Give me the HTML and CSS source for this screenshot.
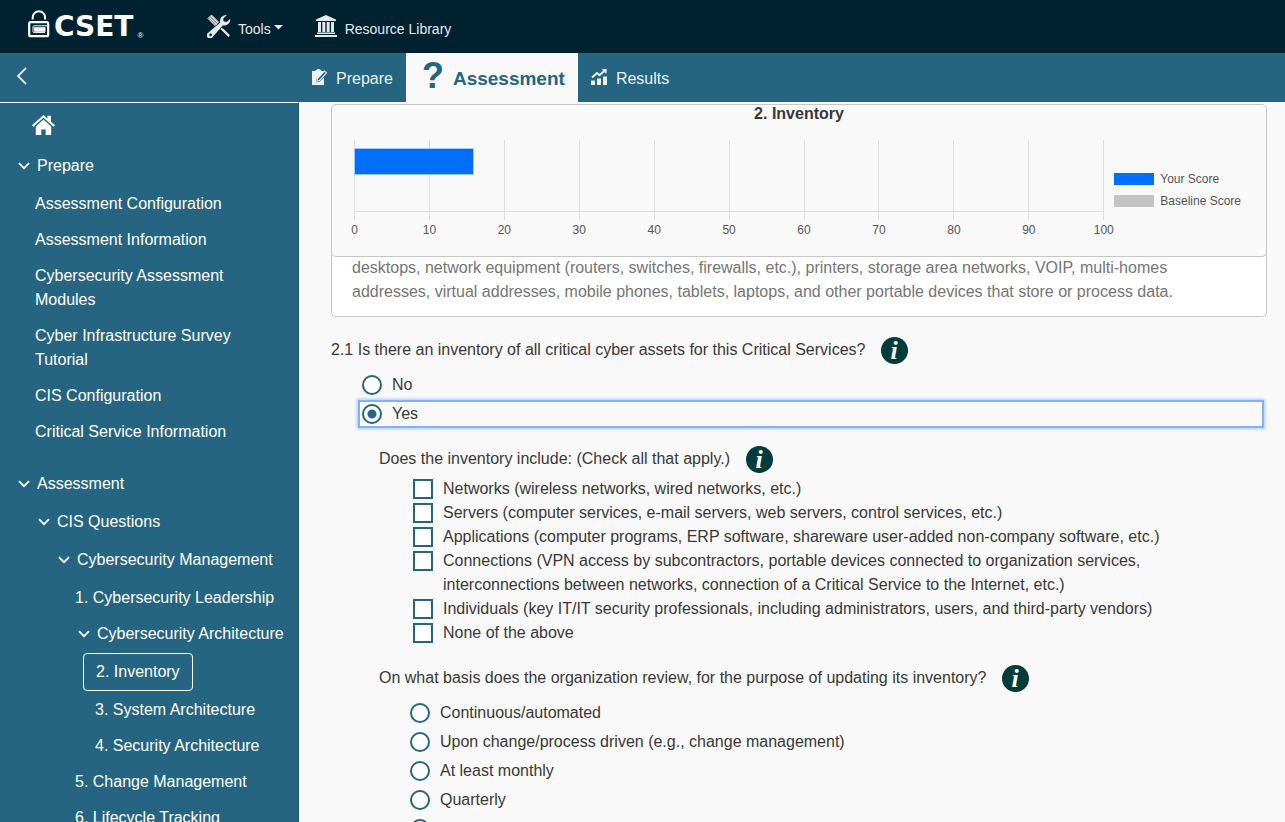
FILE: index.html
```html
<!DOCTYPE html>
<html lang="en">
<head>
<meta charset="utf-8">
<meta name="viewport" content="width=device-width, initial-scale=1">
<title>CSET - 2. Inventory</title>
<link rel="stylesheet" href="styles.css">
</head>
<body>
<svg class="sprite" aria-hidden="true">
  <symbol id="chevron" viewBox="0 0 12 8"><path d="M1 1.2 6 6.2 11 1.2" fill="none" stroke="currentColor" stroke-width="1.8"/></symbol>
</svg>

<header class="topbar">
  <a class="brand" href="#">
    <svg class="lock" width="22" height="28" viewBox="0 0 22 28" aria-hidden="true">
      <path d="M4.700 9.500V7.500a6.200 6.200 0 0 1 12.400 0v2" fill="none" stroke="#fff" stroke-width="2"/>
      <rect x="1.200" y="12.200" width="19" height="14" rx="1.500" fill="none" stroke="#fff" stroke-width="2.200"/>
      <path d="M19 15.800H6.200Q5 15.800 5 17v4.600q0 1 1.200 1H17" fill="none" stroke="#fff" stroke-width="1"/>
      <rect x="6" y="17.200" width="11.500" height="4.600" fill="#fff"/>
    </svg>
    <span class="wordmark">CSET</span><span class="reg">®</span>
  </a>
  <nav class="menu" aria-label="Main">
    <button class="menu-item" type="button">
      <svg width="24" height="24" viewBox="0 0 24 24" aria-hidden="true">
        <path d="M1 4.5 4.5 1 11.5 8 8 11.5Z" fill="#8d9ba2" stroke="#e6e9ea" stroke-width="1"/>
        <path d="M2.5 3.5 9.5 10.5M4 2 11 9" stroke="#e6e9ea" stroke-width="1"/>
        <path d="M14 14.5 22 22.5" stroke="#e6e9ea" stroke-width="1.6"/>
        <path d="M14 14.500 16 14.500 22.800 21 21.500 22.700 15 16Z" fill="#e6e9ea"/>
        <path fill-rule="evenodd" d="M19.8 1.200A5.800 5.800 0 0 0 13.300 8.600L1.500 18.600A3.200 3.200 0 1 0 5.900 22.700L15.900 11.300A5.800 5.800 0 0 0 23.100 4.900L19.700 7.900 16.500 7.300 16.300 4.300ZM3.600 19.600a1.300 1.300 0 1 1 0 2.600 1.300 1.300 0 0 1 0-2.600Z" fill="#e6e9ea"/>
      </svg>
      <span>Tools</span>
      <svg class="caret" width="9" height="5" viewBox="0 0 9 5" aria-hidden="true"><path d="M0 0h9L4.500 4.500Z" fill="#e6e9ea"/></svg>
    </button>
    <a class="menu-item" href="#">
      <svg width="22" height="22" viewBox="0 0 22 22" aria-hidden="true">
        <path d="M11 0 21 4.500V6H1V4.500ZM3 7h3v10H3ZM7.300 7h3v10h-3ZM11.700 7h3v10h-3ZM16 7h3v10h-3ZM2 17.500h18V19H2ZM0 20h22v2H0Z" fill="#e6e9ea"/>
      </svg>
      <span>Resource Library</span>
    </a>
  </nav>
</header>

<div class="tabbar">
  <div class="collapse-cell">
    <button class="collapse" type="button" aria-label="Collapse navigation">
      <svg width="12" height="18" viewBox="0 0 12 18" aria-hidden="true"><path d="M10 1 2 9l8 8" fill="none" stroke="#e6e9ea" stroke-width="1.800"/></svg>
    </button>
  </div>
  <nav class="tabs" aria-label="Assessment steps">
    <a class="tab" href="#">
      <svg width="15" height="16" viewBox="0 0 15 16" aria-hidden="true">
        <path d="M0 2h3.500L4 .8h1.200a1.300 1.300 0 0 1 2.600 0H9l.5 1.200h2L12 3l-1 1.200L4.500 10 4 13.300l3.500-.5L12 8.500V16H0Z" fill="#eef1f2"/>
        <path d="M5.300 10 12.500 2 14.500 3.800 7.400 11.500 4.900 12.300Z" fill="#256581" stroke="#eef1f2" stroke-width="1.100"/>
      </svg>
      <span>Prepare</span>
    </a>
    <a class="tab tab-active" href="#" aria-current="page">
      <span class="question-mark" aria-hidden="true">?</span>
      <span>Assessment</span>
    </a>
    <a class="tab" href="#">
      <svg width="16" height="16" viewBox="0 0 16 16" aria-hidden="true">
        <path d="M0 11.500h4V16H0ZM6 9.500h4V16H6ZM12 7.500h4V16h-4Z" fill="#eef1f2"/>
        <path d="M1 8.500 6 4 8.500 6.300 13 2.200" fill="none" stroke="#eef1f2" stroke-width="1.900"/>
        <path d="M10.500 .3 15.800 0 15.300 5Z" fill="#eef1f2"/>
      </svg>
      <span>Results</span>
    </a>
  </nav>
</div>

<div class="body">
  <nav class="sidebar" aria-label="Assessment navigation">
    <a class="home" href="#" aria-label="Home">
      <svg width="23" height="20" viewBox="0 0 23 20" aria-hidden="true">
        <path d="M0 10.300 11.500 0l4 3.600V.8h3.400v5.900L23 10.300l-1.300 1.500L11.500 2.700 1.300 11.800Z" fill="#fff"/>
        <path d="M3.800 11.500 11.500 4.600l7.700 6.900V20h-5.500v-5.500H9.300V20H3.800Z" fill="#fff"/>
      </svg>
    </a>
    <ul class="tree">
      <li><button class="group level-1" type="button" aria-expanded="true"><svg width="12" height="8" aria-hidden="true"><use href="#chevron"/></svg>Prepare</button>
        <ul>
          <li><a class="leaf leaf-1" href="#">Assessment Configuration</a></li>
          <li><a class="leaf leaf-1" href="#">Assessment Information</a></li>
          <li><a class="leaf leaf-1" href="#">Cybersecurity Assessment Modules</a></li>
          <li><a class="leaf leaf-1" href="#">Cyber Infrastructure Survey Tutorial</a></li>
          <li><a class="leaf leaf-1" href="#">CIS Configuration</a></li>
          <li><a class="leaf leaf-1" href="#">Critical Service Information</a></li>
        </ul>
      </li>
      <li><button class="group level-1" type="button" aria-expanded="true"><svg width="12" height="8" aria-hidden="true"><use href="#chevron"/></svg>Assessment</button>
        <ul>
          <li><button class="group level-2" type="button" aria-expanded="true"><svg width="12" height="8" aria-hidden="true"><use href="#chevron"/></svg>CIS Questions</button>
            <ul>
              <li><button class="group level-3" type="button" aria-expanded="true"><svg width="12" height="8" aria-hidden="true"><use href="#chevron"/></svg>Cybersecurity Management</button>
                <ul>
                  <li><a class="leaf leaf-3" href="#">1. Cybersecurity Leadership</a></li>
                  <li><button class="group level-4" type="button" aria-expanded="true"><svg width="12" height="8" aria-hidden="true"><use href="#chevron"/></svg>Cybersecurity Architecture</button>
                    <ul>
                      <li><a class="leaf leaf-current" href="#" aria-current="page">2. Inventory</a></li>
                      <li><a class="leaf leaf-4" href="#">3. System Architecture</a></li>
                      <li><a class="leaf leaf-4" href="#">4. Security Architecture</a></li>
                    </ul>
                  </li>
                  <li><a class="leaf leaf-3" href="#">5. Change Management</a></li>
                  <li><a class="leaf leaf-3" href="#">6. Lifecycle Tracking</a></li>
                </ul>
              </li>
            </ul>
          </li>
        </ul>
      </li>
    </ul>
  </nav>

  <main class="content">
    <section class="score-card">
      <h1 class="score-title">2. Inventory</h1>
      <div class="chart">
        <div class="plot-column">
          <div class="plot">
            <div class="cell"></div><div class="cell"></div><div class="cell"></div><div class="cell"></div><div class="cell"></div>
            <div class="cell"></div><div class="cell"></div><div class="cell"></div><div class="cell"></div><div class="cell"></div>
            <div class="bar" style="width: 16%"></div>
          </div>
          <div class="axis">
            <span>0</span><span>10</span><span>20</span><span>30</span><span>40</span><span>50</span><span>60</span><span>70</span><span>80</span><span>90</span><span>100</span>
          </div>
        </div>
        <ul class="legend">
          <li><i class="swatch swatch-yours"></i>Your Score</li>
          <li><i class="swatch swatch-baseline"></i>Baseline Score</li>
        </ul>
      </div>
    </section>

    <p class="description">desktops, network equipment (routers, switches, firewalls, etc.), printers, storage area networks, VOIP, multi-homes addresses, virtual addresses, mobile phones, tablets, laptops, and other portable devices that store or process data.</p>

    <div class="question">
      <span>2.1 Is there an inventory of all critical cyber assets for this Critical Services?</span>
      <button class="info" type="button" aria-label="More information"><svg width="27" height="27" viewBox="0 0 27 27" aria-hidden="true"><circle cx="13.5" cy="13.5" r="13.5" fill="#033c3b"/><text x="13" y="22" text-anchor="middle" class="info-letter">i</text></svg></button>
    </div>
    <div class="radios">
      <label class="option"><input type="radio" name="q21"><span>No</span></label>
      <label class="option option-focused"><input type="radio" name="q21" checked><span>Yes</span></label>
    </div>

    <div class="nested">
      <div class="question">
        <span>Does the inventory include: (Check all that apply.)</span>
        <button class="info" type="button" aria-label="More information"><svg width="27" height="27" viewBox="0 0 27 27" aria-hidden="true"><circle cx="13.5" cy="13.5" r="13.5" fill="#033c3b"/><text x="13" y="22" text-anchor="middle" class="info-letter">i</text></svg></button>
      </div>
      <div class="checks">
        <label class="option"><input type="checkbox"><span>Networks (wireless networks, wired networks, etc.)</span></label>
        <label class="option"><input type="checkbox"><span>Servers (computer services, e-mail servers, web servers, control services, etc.)</span></label>
        <label class="option"><input type="checkbox"><span>Applications (computer programs, ERP software, shareware user-added non-company software, etc.)</span></label>
        <label class="option"><input type="checkbox"><span>Connections (VPN access by subcontractors, portable devices connected to organization services, interconnections between networks, connection of a Critical Service to the Internet, etc.)</span></label>
        <label class="option"><input type="checkbox"><span>Individuals (key IT/IT security professionals, including administrators, users, and third-party vendors)</span></label>
        <label class="option"><input type="checkbox"><span>None of the above</span></label>
      </div>

      <div class="question">
        <span>On what basis does the organization review, for the purpose of updating its inventory?</span>
        <button class="info" type="button" aria-label="More information"><svg width="27" height="27" viewBox="0 0 27 27" aria-hidden="true"><circle cx="13.5" cy="13.5" r="13.5" fill="#033c3b"/><text x="13" y="22" text-anchor="middle" class="info-letter">i</text></svg></button>
      </div>
      <div class="radios">
        <label class="option"><input type="radio" name="basis"><span>Continuous/automated</span></label>
        <label class="option"><input type="radio" name="basis"><span>Upon change/process driven (e.g., change management)</span></label>
        <label class="option"><input type="radio" name="basis"><span>At least monthly</span></label>
        <label class="option"><input type="radio" name="basis"><span>Quarterly</span></label>
        <label class="option"><input type="radio" name="basis"><span>Semi-annually</span></label>
      </div>
    </div>
  </main>
</div>
</body>
</html>
```
FILE: styles.css
```css
* { box-sizing: border-box; }

body {
  margin: 0;
  height: 100vh;
  overflow: hidden;
  display: flex;
  flex-direction: column;
  background: #f9f9f9;
  color: #383838;
  font: 16px/24px "Liberation Sans", Arial, sans-serif;
}

ul { list-style: none; margin: 0; padding: 0; }
a { color: inherit; text-decoration: none; }
button { border: 0; padding: 0; background: none; color: inherit; font: inherit; cursor: pointer; }
svg { display: block; flex: none; }
.sprite { position: absolute; width: 0; height: 0; }

/* Top bar */
.topbar {
  flex: none;
  height: 53px;
  display: flex;
  align-items: center;
  background: #002230;
  color: #e6e9ea;
}
.brand { width: 207px; padding-left: 28px; display: flex; align-items: center; gap: 4px; color: #fff; }
.lock { margin-bottom: 6px; }
.wordmark { font: bold 28px/28px "DejaVu Sans", sans-serif; }
.reg { font-size: 8px; line-height: 16px; align-self: flex-end; }
.menu { display: flex; gap: 32px; }
.menu-item { display: flex; align-items: center; gap: 7px; font-size: 14px; }
.menu-item span { padding-top: 4px; }
.caret { margin: 3px 0 0 -4px; }
.menu-item svg { margin-bottom: 2px; }
a.menu-item { gap: 8px; }

/* Tab bar */
.tabbar {
  flex: none;
  height: 49px;
  display: flex;
  background: #256581;
  color: #eef1f2;
}
.collapse-cell { width: 299px; flex: none; display: flex; align-items: center; padding: 0 0 4px 16px; }
.tabs { display: flex; }
.tab { display: flex; align-items: center; gap: 9px; padding: 0 13px; }
.tab span { padding-top: 2px; }
.tab svg { margin-bottom: 2px; }
.tab-active { background: #f9f9f9; color: #256581; font-size: 19px; font-weight: bold; padding-left: 16px; }
.tab .question-mark { font-size: 36px; line-height: 36px; padding: 0 0 4px; }

.body { flex: 1; min-height: 0; display: flex; }

/* Sidebar */
.sidebar {
  width: 299px;
  flex: none;
  overflow: hidden;
  background: #256581;
  color: #fff;
  border-top: 1px solid #fff;
  border-right: 1px solid #1f5870;
}
.home { display: flex; align-items: center; height: 44px; padding-left: 32px; }
.group { display: flex; align-items: center; gap: 7px; width: 100%; height: 38px; text-align: left; white-space: nowrap; }
.leaf { display: block; padding: 7px 48px 5px 0; }
.level-1 { padding-left: 18px; }
.level-2 { padding-left: 38px; }
.level-3 { padding-left: 58px; }
.level-4 { padding-left: 78px; }
.leaf-1 { padding-left: 35px; }
.leaf-3 { padding-left: 75px; padding-right: 0; }
.leaf-4 { padding-left: 95px; padding-right: 0; }
.leaf-current { width: max-content; margin-left: 83px; padding: 6px 12px; border: 1px solid #fff; border-radius: 4px; }
.tree > li + li { margin-top: 16px; }

/* Content */
.content { flex: 1; min-width: 0; overflow: hidden; padding: 2px 18px 0 32px; }

.score-card {
  position: relative;
  height: 153px;
  border: 1px solid #c6c6c6;
  border-radius: 5px;
  background: #f9f9f9;
}
.score-title { margin: 0; font-size: 16px; line-height: 18px; text-align: center; }
.chart { display: flex; gap: 10px; padding: 17px 25px 0 22px; }
.plot-column { flex: 1; min-width: 0; }
.plot { position: relative; display: flex; height: 80px; border-right: 1px solid #dedede; }
.cell { flex: 1; border-left: 1px solid #dedede; position: relative; }
.cell::after { content: ""; position: absolute; left: 0; right: 0; bottom: 8px; height: 1px; background: #dedede; }
.bar { position: absolute; left: 0; top: 8px; height: 27px; background: #0070fa; border: 1px solid #9cc8fa; }
.axis { display: flex; justify-content: space-between; font-size: 12px; line-height: 20px; color: #555; }
.axis span { display: flex; justify-content: center; width: 1px; }
.legend { padding-top: 28px; font-size: 12px; line-height: 22px; color: #555; }
.legend li { display: flex; align-items: center; gap: 6px; white-space: nowrap; }
.swatch { width: 40px; height: 12px; }
.swatch-yours { background: #0070fa; }
.swatch-baseline { background: #c4c4c4; }

.description {
  margin: -6px 0 20px;
  padding: 5px 70px 12px 20px;
  border: 1px solid #c6c6c6;
  border-top: 0;
  border-radius: 5px;
  background: #fff;
  color: #757575;
}

.question { display: flex; align-items: center; gap: 16px; height: 27px; }
.question > span { padding-bottom: 2px; }
.info { flex: none; border-radius: 50%; }
.info-letter { font: italic bold 26px "Liberation Serif", serif; fill: #fff; }

.radios { display: grid; gap: 5px; margin: 9px 5px 20px 29px; }
.checks { margin: 4px 100px 20px 34px; }
.nested { padding-left: 48px; }

.option { display: flex; gap: 10px; }
.radios .option { padding-left: 2px; }
.option input {
  appearance: none;
  flex: none;
  width: 20px;
  height: 20px;
  margin: 2px 0 0;
  border: 2px solid #256581;
  background: #fff;
}
.option input[type="radio"] { border-radius: 50%; }
.option input[type="radio"]:checked { background: radial-gradient(circle, #256581 4px, #fff 5px); }
.option-focused { box-shadow: 0 0 0 2px #85b0f4, 0 0 3px 3px #a6c8fa; }
```
